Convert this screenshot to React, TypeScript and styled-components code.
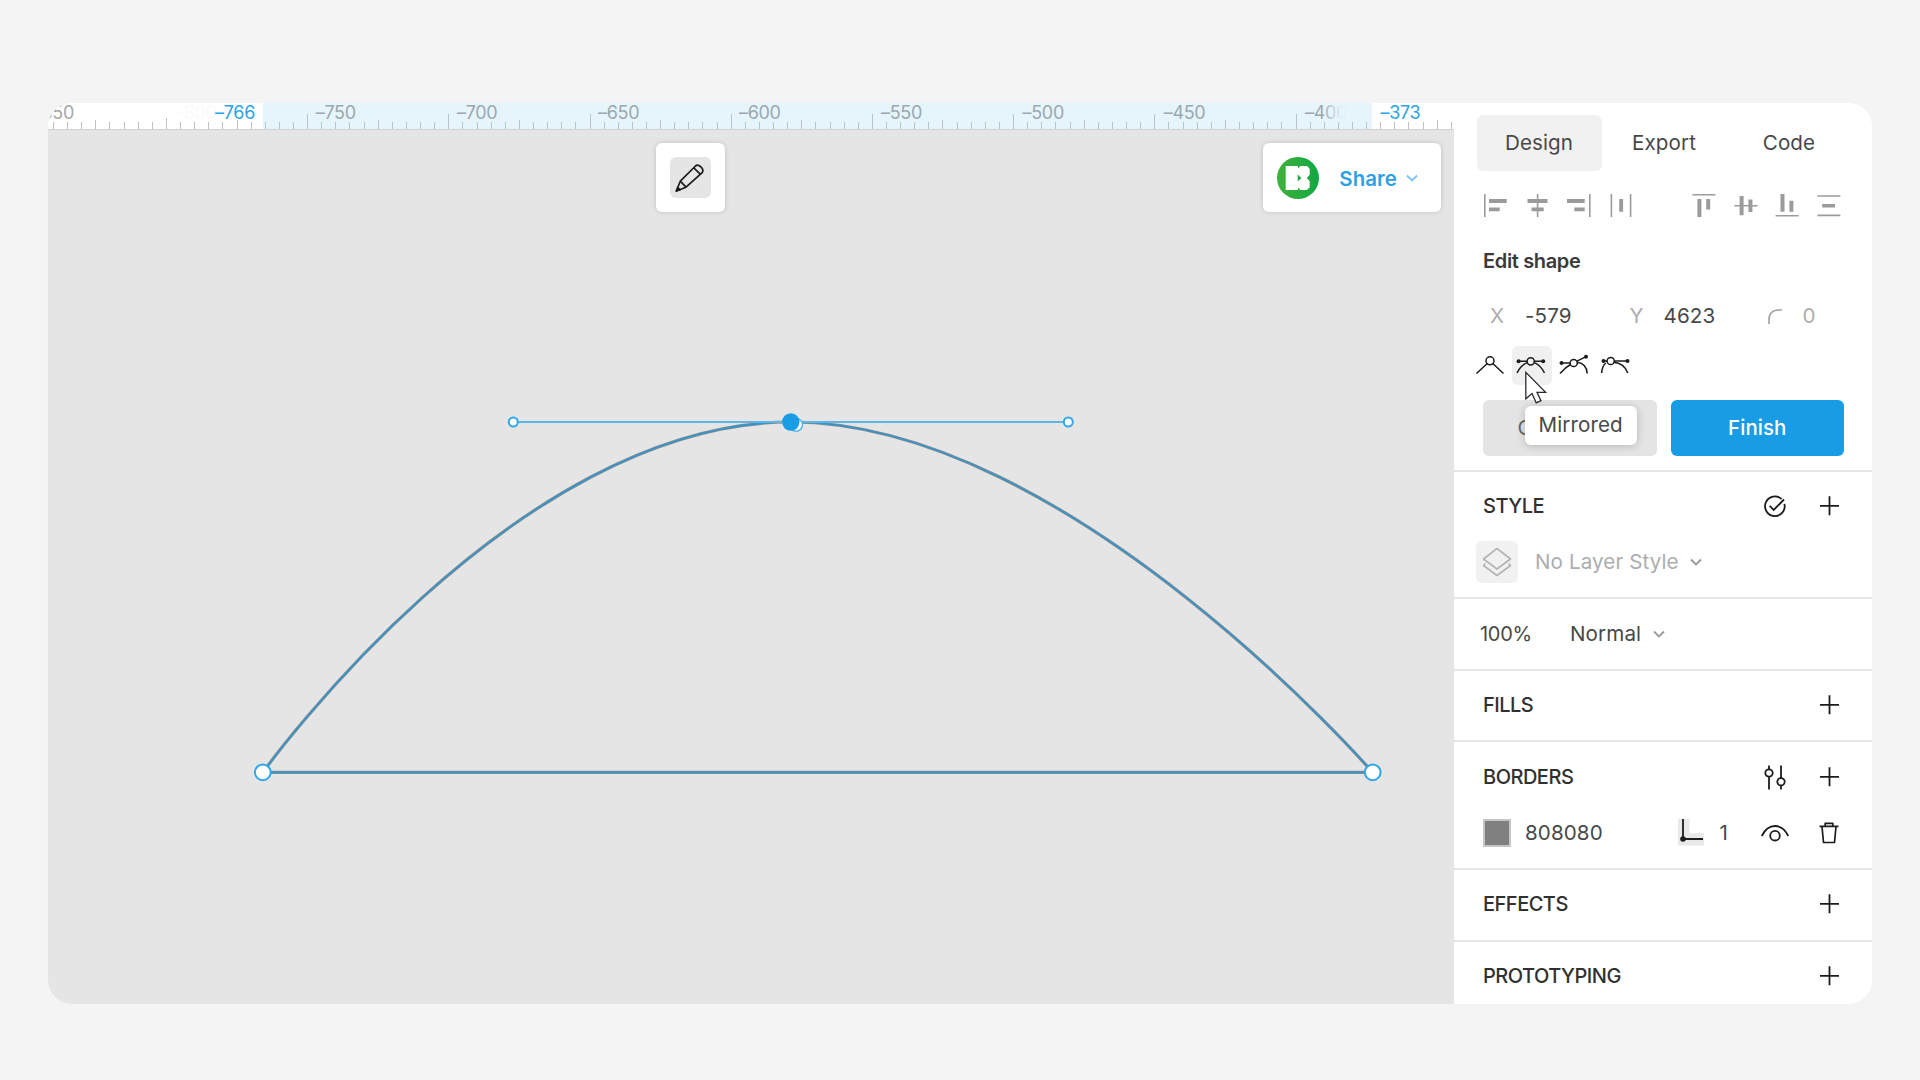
import React from "react";
import styled, { createGlobalStyle } from "styled-components";

const BLUE = "#189ce4";
const INK = "#1c1c1c";

const GlobalStyle = createGlobalStyle`
  * { box-sizing: border-box; }
  body { margin: 0; background: #f4f4f4; font-family: Inter, "Liberation Sans", sans-serif; }
  svg { display: block; overflow: visible; flex: none; }
`;

const Page = styled.main`
  width: 1920px;
  height: 1080px;
  padding: 103px 48px 76px;
  background: #f4f4f4;
`;

const AppWindow = styled.div`
  display: flex;
  width: 1824px;
  height: 901px;
  border-radius: 24px;
  overflow: hidden;
  background: #fff;
`;

/* ---------- canvas ---------- */

const Workspace = styled.section`
  display: flex;
  flex-direction: column;
  width: 1406px;
  flex: none;
`;

const RulerBar = styled.div`
  position: relative;
  height: 27px;
  flex: none;
  overflow: hidden;
  background: #fff;
  border-bottom: 1px solid #cfd1d2;
`;

const RulerRange = styled.div`
  position: absolute;
  left: 215px;
  top: 0;
  width: 1109px;
  height: 26px;
  background: #e6f4fc;
`;

const Ticks = styled.svg`
  position: absolute;
  left: 0;
  top: 0;
`;

const RulerLabel = styled.span<{ $x: number; $color?: string }>`
  position: absolute;
  left: ${(p) => p.$x}px;
  top: 0;
  font-size: 18px;
  line-height: 20px;
  letter-spacing: -0.3px;
  white-space: nowrap;
  color: ${(p) => p.$color ?? "#9ba8ae"};
`;

const LabelFade = styled.div`
  position: absolute;
  left: 1274px;
  top: 0;
  width: 48px;
  height: 19px;
  background: linear-gradient(90deg, rgba(230, 244, 252, 0), rgba(230, 244, 252, 0.92) 38%, #e6f4fc 60%);
`;

const Stage = styled.div`
  position: relative;
  flex: 1;
  background: #e5e5e5;
`;

const Drawing = styled.svg`
  position: absolute;
  left: 0;
  top: 0;
`;

const FloatingBars = styled.div`
  position: relative;
  display: flex;
  justify-content: space-between;
  padding: 13px 13px 0 608px;
`;

const Card = styled.div`
  display: flex;
  align-items: center;
  height: 69px;
  padding: 0 14px;
  border-radius: 6px;
  background: #fff;
  box-shadow: 0 0 5px rgba(0, 0, 0, 0.16);
`;

const ToolButton = styled.button`
  width: 41px;
  height: 41px;
  padding: 0;
  border: 0;
  border-radius: 6px;
  background: #e5e5e5;
`;

const ShareLabel = styled.span`
  margin: 1px 9px 0 20.5px;
  font-size: 20.4px;
  font-weight: 600;
  letter-spacing: 0.1px;
  color: #2d9fe6;
`;

/* ---------- sidebar ---------- */

const Sidebar = styled.aside`
  position: relative;
  width: 418px;
  flex: none;
  background: #fff;
`;

const Section = styled.section<{ $h: number }>`
  height: ${(p) => p.$h + 2}px;
  border-bottom: 2px solid #e6e6e6;
`;

const Tabs = styled.div`
  display: flex;
  padding: 12px 0 0 22.5px;
`;

const Tab = styled.button<{ $active?: boolean }>`
  width: 125px;
  height: 56px;
  padding: 0 0 2px;
  border: 0;
  border-radius: 6px;
  background: ${(p) => (p.$active ? "#f1f1f1" : "transparent")};
  font: 400 20.6px Inter, sans-serif;
  letter-spacing: 0.1px;
  color: #484848;
`;

const AlignGrid = styled.div`
  display: grid;
  grid-template-columns: repeat(9, 1fr);
  justify-items: center;
  width: 375px;
  margin: 23px 0 0 21px;
`;

const Heading = styled.h2`
  margin: 31px 0 0 29px;
  font-size: 20px;
  line-height: 24px;
  font-weight: 600;
  letter-spacing: -0.35px;
  color: #3a3a3a;
`;

const Coordinates = styled.div`
  display: flex;
  align-items: center;
  height: 24px;
  margin: 31px 0 0 36px;
`;

const Value = styled.span<{ $w?: number; $muted?: boolean; $tight?: boolean }>`
  ${(p) => (p.$w ? `width: ${p.$w}px;` : "")}
  flex: none;
  font-size: ${(p) => (p.$tight ? 20 : 20.6)}px;
  line-height: 24px;
  letter-spacing: ${(p) => (p.$tight ? -0.3 : 0.1)}px;
  white-space: nowrap;
  color: ${(p) => (p.$muted ? "#adadad" : "#484848")};
`;

const PointTypes = styled.div`
  display: flex;
  gap: 2px;
  margin: 18px 0 0 16.5px;
`;

const PointType = styled.button<{ $active?: boolean }>`
  width: 39.5px;
  height: 39px;
  padding: 0;
  border: 0;
  border-radius: 6px;
  background: ${(p) => (p.$active ? "#f0f0f0" : "transparent")};
`;

const Actions = styled.div`
  display: flex;
  gap: 14px;
  margin: 15px 0 0 29px;
`;

const Action = styled.button<{ $primary?: boolean }>`
  width: 173.5px;
  height: 55.5px;
  padding: 0;
  border: 0;
  border-radius: 6px;
  background: ${(p) => (p.$primary ? BLUE : "#e4e4e4")};
  font: ${(p) => (p.$primary ? 500 : 400)} 20.4px Inter, sans-serif;
  letter-spacing: 0.1px;
  color: ${(p) => (p.$primary ? "#fff" : "#666")};
`;

const SectionHead = styled.div<{ $h?: number }>`
  display: flex;
  align-items: center;
  height: ${(p) => p.$h ?? 68}px;
  padding: 0 33px 0 29px;
`;

const SectionTitle = styled.h3`
  flex: 1;
  margin: 0;
  font-size: 20px;
  line-height: 24px;
  font-weight: 500;
  letter-spacing: -0.5px;
  color: #303030;
`;

const HeadIcon = styled.div`
  margin-right: 33px;
`;

const LayerStyle = styled.div`
  display: flex;
  align-items: center;
  margin: 1px 0 0 22px;
`;

const LayerTile = styled.div`
  width: 42px;
  height: 42px;
  margin-right: 17px;
  border-radius: 6px;
  background: #f1f1f1;
`;

const BlendRow = styled.div`
  display: flex;
  align-items: center;
  height: 70px;
  padding-left: 26px;
`;

const BorderRow = styled.div`
  display: flex;
  align-items: center;
  height: 41px;
  padding-left: 29px;
`;

const Swatch = styled.div`
  width: 28px;
  height: 28px;
  margin-right: 14px;
  border: 2px solid #c6c6c6;
  background: #808080;
`;

const Gap = styled.div<{ $w: number }>`
  width: ${(p) => p.$w}px;
  flex: none;
`;

const Cursor = styled.svg`
  position: absolute;
  left: 71px;
  top: 267.5px;
`;

const Tooltip = styled.div`
  position: absolute;
  left: 71px;
  top: 303px;
  width: 112px;
  height: 39px;
  padding-left: 13.5px;
  border-radius: 6px;
  background: #fff;
  box-shadow: 0 1px 8px rgba(0, 0, 0, 0.2);
  font-size: 20.6px;
  line-height: 38px;
  letter-spacing: 0.1px;
  color: #484848;
`;

/* ---------- icons ---------- */

const ALIGN_ICONS: (string | null)[] = [
  "M0 0h1.6v23H0zM5 5h17.7v4H5zM5 13.6h10.7v3.6H5z",
  "M11.8 0h1.6v23h-1.6zM2.5 5h20v4h-20zM6.500 13.6h12.2v3.6H6.500z",
  "M22 0h1.6v23H22zM0 5h17.7v4H0zM7.3 13.6h10.4v3.6H7.3z",
  "M1.6 0h1.6v23H1.6zM20.8 0h1.6v23h-1.6zM10.2 5h3.9v12.8h-3.9z",
  null,
  "M.4 0h23v1.6H.4zM5.4 5h4v18h-4zM14.2 5h4v10.6h-4z",
  "M.4 11h23v1.6H.4zM5.6 2h4v19.2h-4zM14.4 5.6h4V18h-4z",
  "M.6 21h23v1.6h-23zM5.5 0h4v17.8h-4zM14.4 6.8h4v11h-4z",
  "M.4 1.2h23v1.6H.4zM.4 20.6h23v1.6H.4zM5.2 10h12.8v3.6H5.2z",
];

const Chevron = ({ color, w = 1.8 }: { color: string; w?: number }) => (
  <svg width="12" height="8" viewBox="0 0 12 8" fill="none" stroke={color} strokeWidth={w}>
    <path d="M1 1.5l5 5 5-5" />
  </svg>
);

const Plus = () => (
  <svg width="20" height="20" viewBox="0 0 20 20" stroke={INK} strokeWidth="1.8">
    <path d="M1 9.8h19M10.5 .3v19" />
  </svg>
);

const Pencil = () => (
  <svg width="41" height="41" viewBox="0 0 41 41" fill="none" stroke={INK} strokeWidth="1.7" strokeLinejoin="round">
    <path d="M6.3 34l4-9.800L25.500 9c3-2.600 9.200 3 6.700 6.700L16 30.200zM10.300 24.200l5.700 6M23.800 10.800l6.700 6.500" />
    <path d="M6.300 34l1.500-3.500 2.300 2.300z" fill={INK} />
  </svg>
);

const Avatar = () => (
  <svg width="42" height="42" viewBox="0 0 42 42">
    <defs>
      <linearGradient id="leaf" x1="0" x2="1">
        <stop offset="0" stopColor="#41b13b" />
        <stop offset="1" stopColor="#11a743" />
      </linearGradient>
    </defs>
    <circle cx="21" cy="21" r="21" fill="url(#leaf)" />
    <path
      fill="#fff"
      d="M8.700 9H21v2.500L23.500 9H30l2.700 2.800v6L29.800 21l2.900 3.200v6L30 33h-6.500L21 30.500V33H8.700z"
    />
    <path d="M20.700 17.500l3.800 3.500-3.800 3.500z" fill="#26ad3f" />
  </svg>
);

const pointStroke = { fill: "none", stroke: INK, strokeWidth: 1.5 };

const CornerPoint = () => (
  <svg width="39" height="39" viewBox="0 0 39 39" {...pointStroke}>
    <path d="M5.500 27.500L16.500 17.300M32.500 27.500L21.500 17.300" />
    <circle cx="19" cy="14.800" r="4" />
  </svg>
);

const MirroredPoint = () => (
  <svg width="39" height="39" viewBox="0 0 39 39" {...pointStroke}>
    <path d="M5 27c2.500-5 6-8.800 10.300-10.400M32.500 27c-2.500-5-6-8.800-10.300-10.400M6.500 15.300h8.700M22.300 15.300h9" />
    <circle cx="18.700" cy="15.300" r="3.600" />
    <circle cx="6.600" cy="15.300" r="2" fill={INK} stroke="none" />
    <circle cx="31.200" cy="15.300" r="2" fill={INK} stroke="none" />
  </svg>
);

const AsymmetricPoint = () => (
  <svg width="39" height="39" viewBox="0 0 39 39" {...pointStroke}>
    <path d="M6 27.500c3.500-4 6-6.500 10.500-9M8 17h8.300M23 15.200l9-4.500M23 16.200c6 .8 10 4.600 10.200 11.300" />
    <circle cx="19.700" cy="17" r="3.600" />
    <circle cx="7.500" cy="17" r="2" fill={INK} stroke="none" />
    <circle cx="32" cy="10.700" r="2" fill={INK} stroke="none" />
  </svg>
);

const DisconnectedPoint = () => (
  <svg width="39" height="39" viewBox="0 0 39 39" {...pointStroke}>
    <path d="M6.700 27c.2-4.500 1.400-7.700 4-10M18.500 16.300c7 .7 12 4.400 14.300 10.700M8.500 15h3.500M19.200 15H32.500" />
    <circle cx="15.700" cy="15" r="3.600" />
    <circle cx="8.500" cy="15" r="2" fill={INK} stroke="none" />
    <circle cx="32.500" cy="15" r="2" fill={INK} stroke="none" />
  </svg>
);

const RadiusIcon = () => (
  <svg width="14" height="15" viewBox="0 0 14 15" fill="none" stroke="#a0a0a0" strokeWidth="1.600">
    <path d="M1 15V11C1 4.500 4.500 1 11 1h3" />
  </svg>
);

const CheckCircle = () => (
  <svg width="22" height="22" viewBox="0 0 22 22" fill="none" stroke={INK} strokeWidth="1.800">
    <path d="M17.600 4.100A9.800 9.800 0 1 0 20.400 8.900M5.700 10.800l4 4.200L20 4.500" />
  </svg>
);

const LayersIcon = () => (
  <svg width="42" height="42" viewBox="0 0 42 42" fill="none" stroke="#b4b4b4" strokeWidth="1.600" strokeLinejoin="round">
    <path d="M21 7.500L34.500 18 21 28 7.500 18zM9.500 22.500l-2 2L21 34.500l13.500-10-2-2" />
  </svg>
);

const Sliders = () => (
  <svg width="22" height="26" viewBox="0 0 22 26" fill="none" stroke={INK} strokeWidth="1.800">
    <path d="M5 1.500v3.500M5 13V25.500M17 1.500v12.500M17 22V25.500" />
    <circle cx="5" cy="9" r="3.700" />
    <circle cx="17" cy="17.800" r="3.700" />
  </svg>
);

const BorderSide = () => (
  <svg width="26" height="27" viewBox="0 0 26 27">
    <path d="M0 0h11.500v14H26v12.500H0z" fill="#e9e9e9" />
    <path d="M5 0v20h20" fill="none" stroke={INK} strokeWidth="1.800" />
    <circle cx="5" cy="20" r="2.800" fill={INK} />
  </svg>
);

const Eye = () => (
  <svg width="28" height="18" viewBox="0 0 28 18" fill="none" stroke={INK} strokeWidth="1.800">
    <path d="M.8 12C4 5.300 8.500 2 14 2s10 3.300 13.200 10" />
    <circle cx="14" cy="11.700" r="4.800" />
  </svg>
);

const Trash = () => (
  <svg width="20" height="22" viewBox="0 0 20 22" fill="none" stroke={INK} strokeWidth="1.700" strokeLinejoin="round">
    <path d="M.5 4.300h19M6.200 4V1.300h7.600V4M3 4.500l1.500 16h11l1.500-16" />
  </svg>
);

/* ---------- ruler ---------- */

const STEP = 14.12;
const FIRST_MAJOR = 118.9;

const RulerTicks = () => (
  <Ticks width="1406" height="26" stroke="#bcc3c6" strokeWidth="1">
    {Array.from({ length: 101 }, (_, n) => {
      const i = n - 8;
      const x = Math.round(FIRST_MAJOR + i * STEP) - 0.5;
      const major = i % 10 === 0 && i < 90;
      const top = major ? 11 : i % 5 === 0 ? 17 : 19;
      return <path key={i} d={`M${x} ${i === 0 ? 15 : top}V26`} />;
    })}
  </Ticks>
);

const LABELS: [string, number, string?][] = [
  ["850", -6.500, "#a6a6a6"],
  ["–800", 127, "#fafafa"],
  ["–750", 267.700],
  ["–700", 409],
  ["–650", 550],
  ["–600", 691],
  ["–550", 833],
  ["–500", 974.500],
  ["–450", 1115.700],
  ["–400", 1257],
];

export default function App() {
  return (
    <Page>
      <GlobalStyle />
      <AppWindow>
        <Workspace>
          <RulerBar>
            <RulerRange />
            <RulerTicks />
            {LABELS.map(([text, x, color]) => (
              <RulerLabel key={text} $x={x} $color={color}>{text}</RulerLabel>
            ))}
            <LabelFade />
            <RulerLabel $x={167} $color="#2ba3e5">–766</RulerLabel>
            <RulerLabel $x={1332.500} $color="#2ba3e5">–373</RulerLabel>
          </RulerBar>
          <Stage>
            <Drawing width="1406" height="874" viewBox="48 130 1406 874" fill="none">
              <path d="M263 772.300C263 772.300 513.300 422 791 422C1068.300 422 1372.500 772.300 1372.500 772.300Z" stroke="#8c8c8c" strokeWidth="3.200" />
              <path d="M263 772.300C263 772.300 513.300 422 791 422C1068.300 422 1372.500 772.300 1372.500 772.300Z" stroke="#3395cd" strokeWidth="1.700" />
              <path d="M513.300 422H1068.300" stroke="#5fb5e6" strokeWidth="2" />
              <circle cx="796" cy="424.800" r="6.500" fill="#f4fafd" stroke="#5ab6e9" strokeWidth="1.500" />
              <circle cx="790.800" cy="422" r="8.700" fill={BLUE} />
              <g fill="#fff" stroke="#31a7e8" strokeWidth="2">
                <circle cx="513.300" cy="422" r="4.500" />
                <circle cx="1068.300" cy="422" r="4.500" />
                <circle cx="262.800" cy="772.300" r="7.900" />
                <circle cx="1372.700" cy="772.300" r="7.900" />
              </g>
            </Drawing>
            <FloatingBars>
              <Card><ToolButton><Pencil /></ToolButton></Card>
              <Card>
                <Avatar />
                <ShareLabel>Share</ShareLabel>
                <Chevron color="#7cc6f2" />
                <Gap $w={9} />
              </Card>
            </FloatingBars>
          </Stage>
        </Workspace>

        <Sidebar>
          <Section $h={367}>
            <Tabs>
              <Tab $active>Design</Tab>
              <Tab>Export</Tab>
              <Tab>Code</Tab>
            </Tabs>
            <AlignGrid>
              {ALIGN_ICONS.map((d, i) =>
                d ? (
                  <svg key={i} width="24" height="24" viewBox="0 0 24 24" fill="#9b9b9b"><path d={d} /></svg>
                ) : (
                  <span key={i} />
                )
              )}
            </AlignGrid>
            <Heading>Edit shape</Heading>
            <Coordinates>
              <Value $w={35} $muted>X</Value>
              <Value $w={104.500}>-579</Value>
              <Value $w={34} $muted>Y</Value>
              <Value $w={104}>4623</Value>
              <RadiusIcon />
              <Gap $w={21} />
              <Value $muted>0</Value>
            </Coordinates>
            <PointTypes>
              <PointType><CornerPoint /></PointType>
              <PointType $active><MirroredPoint /></PointType>
              <PointType><AsymmetricPoint /></PointType>
              <PointType><DisconnectedPoint /></PointType>
            </PointTypes>
            <Actions>
              <Action>Close Path</Action>
              <Action $primary>Finish</Action>
            </Actions>
          </Section>

          <Section $h={125}>
            <SectionHead>
              <SectionTitle>STYLE</SectionTitle>
              <HeadIcon><CheckCircle /></HeadIcon>
              <Plus />
            </SectionHead>
            <LayerStyle>
              <LayerTile><LayersIcon /></LayerTile>
              <Value $w={155} $muted>No Layer Style</Value>
              <Chevron color="#999" />
            </LayerStyle>
          </Section>

          <Section $h={70}>
            <BlendRow>
              <Value $w={90} $tight>100%</Value>
              <Value $w={83}>Normal</Value>
              <Chevron color="#999" />
            </BlendRow>
          </Section>

          <Section $h={69}>
            <SectionHead>
              <SectionTitle>FILLS</SectionTitle>
              <Plus />
            </SectionHead>
          </Section>

          <Section $h={126}>
            <SectionHead $h={70}>
              <SectionTitle>BORDERS</SectionTitle>
              <HeadIcon><Sliders /></HeadIcon>
              <Plus />
            </SectionHead>
            <BorderRow>
              <Swatch />
              <Value $w={153}>808080</Value>
              <BorderSide />
              <Gap $w={15.500} />
              <Value $w={41}>1</Value>
              <Eye />
              <Gap $w={30.500} />
              <Trash />
            </BorderRow>
          </Section>

          <Section $h={70}>
            <SectionHead>
              <SectionTitle>EFFECTS</SectionTitle>
              <Plus />
            </SectionHead>
          </Section>

          <SectionHead>
            <SectionTitle>PROTOTYPING</SectionTitle>
            <Plus />
          </SectionHead>

          <Cursor width="23" height="34" viewBox="0 0 23 34" fill="#fff" stroke="#2a2a33" strokeWidth="1.300">
            <path d="M.8 1.300v26.500l6.200-5.300 4.200 9.300 4.800-2.200-4-8.300h8.600z" />
          </Cursor>
          <Tooltip>Mirrored</Tooltip>
        </Sidebar>
      </AppWindow>
    </Page>
  );
}
